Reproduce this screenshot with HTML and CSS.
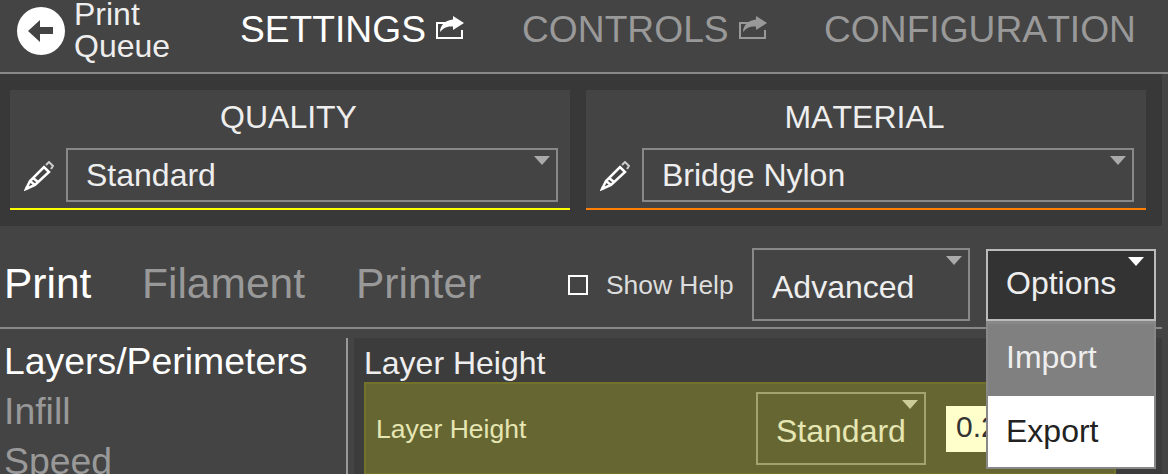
FILE: index.html
```html
<!DOCTYPE html>
<html lang="en">
<head>
  <meta charset="UTF-8" />
  <title>Settings</title>
  <link rel="stylesheet" href="styles.css">
</head>
<body>
  <header class="topbar">
    <div class="back">
      <svg class="back-icon" width="48" height="48" viewBox="0 0 48 48">
        <circle cx="24" cy="24" r="24" fill="#fff" />
        <path d="M11 24 L23 13 V20 H36 V27 H23 V35 Z" fill="#444" />
      </svg>
      <span class="back-text">Print<br />Queue</span>
    </div>
    <div class="nav-item active nav-settings">SETTINGS
      <svg class="share" width="28" height="24" viewBox="0 0 28 24">
        <path d="M10 7H1V22H26V14" fill="none" stroke="#fff" stroke-width="2" />
        <path d="M17 0 L28 7 L17 14 V10.5 C12 10 8 11 4 16 C4 9 10 4 17 3.5Z" fill="#fff" />
      </svg>
    </div>
    <div class="nav-item nav-controls">CONTROLS
      <svg class="share" width="28" height="24" viewBox="0 0 28 24">
        <path d="M10 7H1V22H26V14" fill="none" stroke="#999" stroke-width="2" />
        <path d="M17 0 L28 7 L17 14 V10.5 C12 10 8 11 4 16 C4 9 10 4 17 3.5Z" fill="#999" />
      </svg>
    </div>
    <div class="nav-item nav-config">CONFIGURATION</div>
  </header>

  <section class="presets">
    <div class="preset quality">
      <div class="preset-title">QUALITY</div>
      <div class="preset-row">
        <svg class="pencil" width="30" height="30" viewBox="0 0 30 30">
          <path d="M2 28 L6 20 L20 6 L25 11 L11 24 Z M6 20 L11 24 M9 17 L14 21" fill="none" stroke="#fff" stroke-width="2.5" />
          <path d="M22 4 L25 1 L29 5 L27 8" fill="none" stroke="#ccc" stroke-width="2" />
          <path d="M1 29 L2 25 L5 28 Z" fill="#fff" />
        </svg>
        <div class="select preset-select">Standard<span class="arrow"></span></div>
      </div>
    </div>
    <div class="preset material">
      <div class="preset-title">MATERIAL</div>
      <div class="preset-row">
        <svg class="pencil" width="30" height="30" viewBox="0 0 30 30">
          <path d="M2 28 L6 20 L20 6 L25 11 L11 24 Z M6 20 L11 24 M9 17 L14 21" fill="none" stroke="#fff" stroke-width="2.5" />
          <path d="M22 4 L25 1 L29 5 L27 8" fill="none" stroke="#ccc" stroke-width="2" />
          <path d="M1 29 L2 25 L5 28 Z" fill="#fff" />
        </svg>
        <div class="select preset-select">Bridge Nylon<span class="arrow"></span></div>
      </div>
    </div>
  </section>

  <section class="tabs">
    <div class="tab active tab-print">Print</div>
    <div class="tab tab-filament">Filament</div>
    <div class="tab tab-printer">Printer</div>
    <label class="help"><span class="checkbox"></span>Show Help</label>
    <div class="select level">Advanced<span class="arrow"></span></div>
    <div class="options">
      <div class="select options-btn">Options<span class="arrow arrow-white"></span></div>
      <div class="menu">
        <div class="menu-item hover">Import</div>
        <div class="menu-item">Export</div>
      </div>
    </div>
  </section>

  <main class="main">
    <nav class="sidebar">
      <div class="side-item active">Layers/Perimeters</div>
      <div class="side-item">Infill</div>
      <div class="side-item">Speed</div>
    </nav>
    <div class="divider"></div>
    <div class="content">
      <div class="group-title">Layer Height</div>
      <div class="setting">
        <span class="setting-label">Layer Height</span>
        <div class="select setting-select">Standard<span class="arrow arrow-olive"></span></div>
        <div class="setting-input">0.2</div>
      </div>
    </div>
  </main>
</body>
</html>
```

FILE: styles.css
```css
html, body {
  margin: 0;
  height: 474px;
  overflow: hidden;
}
body {
  background-color: #444;
  color: #fff;
  font-family: "Liberation Sans", Arial, sans-serif;
  font-kerning: none;
}

/* top bar */
.topbar {
  display: flex;
  align-items: center;
  height: 72px;
  padding-left: 17px;
  border-bottom: 2px solid #888;
}
.back {
  display: flex;
  align-items: center;
  width: 223px;
}
.back-icon {
  flex: none;
  margin-top: -10px;
}
.back-text {
  margin-left: 9px;
  margin-top: -13px;
  font-size: 32px;
  line-height: 32px;
  color: #eee;
}
.nav-item {
  display: flex;
  align-items: center;
  font-size: 37.2px;
  margin-top: -14px;
  color: #999;
  white-space: nowrap;
}
.nav-item.active {
  color: #fff;
}
.share {
  margin-left: 10px;
  margin-top: -2px;
}
.nav-settings {
  width: 282px;
}
.nav-controls {
  width: 302px;
}

/* quality and material */
.presets {
  display: flex;
  gap: 16px;
  width: 1162px;
  height: 152px;
  box-sizing: border-box;
  padding: 16px 16px 16px 10px;
  background-color: #383838;
}
.preset {
  flex: 1;
  background-color: #444;
  border-bottom: 2px solid;
}
.quality {
  border-color: #ff0;
}
.material {
  border-color: #ff8000;
}
.preset-title {
  height: 58px;
  padding-right: 3px;
  line-height: 54px;
  text-align: center;
  font-size: 32px;
  color: #eee;
}
.preset-row {
  display: flex;
  align-items: center;
  padding: 0 12px 0 14px;
}
.pencil {
  flex: none;
  margin-right: 12px;
  margin-top: 2px;
}
.select {
  position: relative;
  box-sizing: border-box;
  border: 2px solid #888;
  font-size: 32px;
  color: #eee;
}
.preset-select {
  flex: 1;
  height: 54px;
  line-height: 51px;
  padding-left: 18px;
}
.arrow {
  position: absolute;
  top: 6px;
  right: 6px;
  border-left: 8px solid transparent;
  border-right: 8px solid transparent;
  border-top: 9px solid #aaa;
}
.arrow-white {
  right: 10px;
  border-top-color: #fff;
}
.arrow-olive {
  border-top-color: #cc9;
}

/* print / filament / printer */
.tabs {
  display: flex;
  align-items: flex-start;
  width: 1162px;
  height: 101px;
  border-bottom: 2px solid #888;
}
.tab {
  font-size: 42.5px;
  line-height: 48px;
  margin-top: 34px;
  color: #999;
}
.tab.active {
  color: #fff;
}
.tab-print {
  margin-left: 4px;
  width: 138px;
}
.tab-filament {
  width: 214px;
}
.tab-printer {
  width: 212px;
}
.help {
  display: flex;
  align-items: center;
  width: 184px;
  margin-top: 44px;
  font-size: 26.4px;
  line-height: 30px;
  color: #ddd;
}
.checkbox {
  box-sizing: border-box;
  width: 20px;
  height: 20px;
  margin-right: 18px;
  border: 2px solid #fff;
}
.level {
  width: 218px;
  height: 73px;
  margin-top: 22px;
  padding: 19px 0 0 18px;
}
.options {
  position: relative;
  margin-left: 16px;
  margin-top: 23px;
}
.options-btn {
  width: 170px;
  height: 72px;
  padding: 14px 0 0 18px;
  background-color: #333;
  border-color: #bbb;
}
.menu {
  position: absolute;
  z-index: 2;
  top: 72px;
  left: 0;
  width: 170px;
  box-sizing: border-box;
  border: 2px solid #888;
  border-top-width: 3px;
}
.menu-item {
  height: 71px;
  box-sizing: border-box;
  padding: 17px 0 0 18px;
  font-size: 32px;
  background-color: #fff;
  color: #222;
}
.menu-item.hover {
  height: 72px;
  padding-top: 15px;
  background-color: #808080;
  color: #eee;
}

/* lower part */
.main {
  display: flex;
  align-items: flex-start;
  width: 1162px;
}
.sidebar {
  width: 342px;
  padding-left: 4px;
}
.side-item {
  font-size: 37.4px;
  line-height: 50px;
  color: #999;
  white-space: nowrap;
}
.side-item.active {
  color: #fff;
}
.sidebar .side-item:first-child {
  margin-top: 7px;
}
.divider {
  width: 2px;
  height: 136px;
  margin-top: 9px;
  background-color: #999;
}
.content {
  flex: 1;
  height: 136px;
  margin-top: 9px;
  margin-left: 6px;
  padding-left: 10px;
  background-color: #3c3c3c;
}
.group-title {
  height: 44px;
  line-height: 50px;
  font-size: 32px;
  color: #eee;
}
.setting {
  display: flex;
  align-items: center;
  box-sizing: border-box;
  width: 752px;
  height: 93px;
  padding-left: 11px;
  background-color: #663;
  border: 2px solid #72722a;
}
.setting-label {
  width: 379px;
  margin-top: 2px;
  margin-left: -1px;
  font-size: 26.5px;
  color: #e6e6b3;
}
.setting-select {
  width: 170px;
  height: 73px;
  margin-left: 1px;
  padding: 19px 0 0 18px;
  border-color: #a3a370;
  color: #e6e6b3;
}
.setting-input {
  width: 160px;
  height: 46px;
  margin-left: 20px;
  padding-left: 10px;
  box-sizing: border-box;
  background-color: #ffc;
  color: #333;
  font-size: 30px;
  line-height: 42px;
}
```
